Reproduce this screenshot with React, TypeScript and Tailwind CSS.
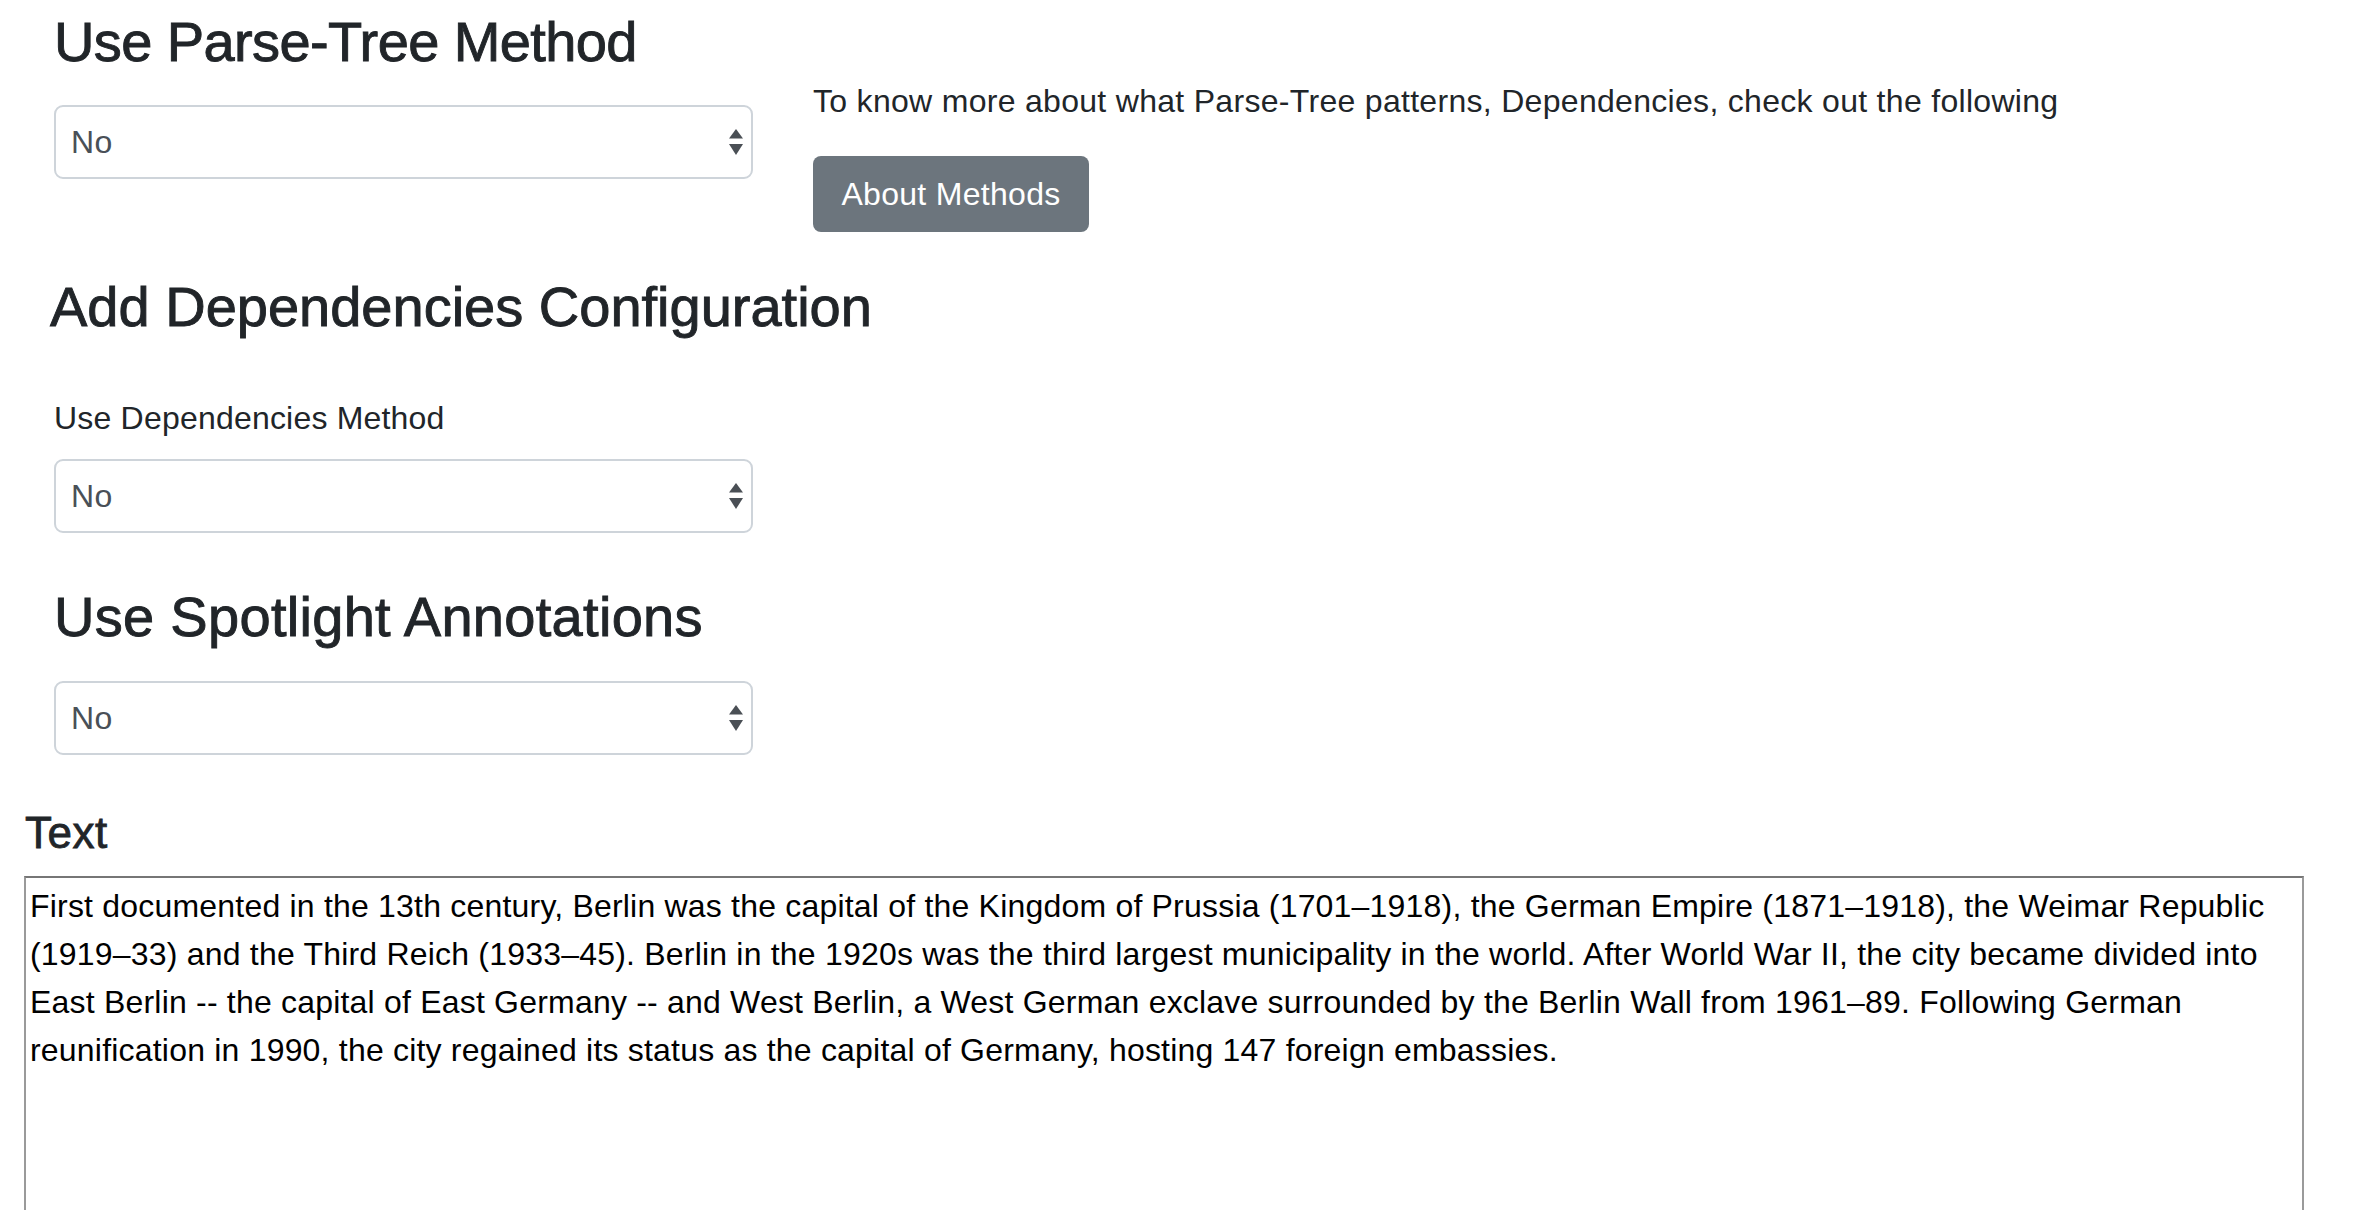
import React from "react";

function SelectBox() {
  return (
    <div className="flex h-[74px] w-[699px] items-center justify-between rounded-[9px] border-2 border-[#ced4da] bg-white pl-[15px] pr-[8px]">
      <span className="text-[32px] leading-[48px] tracking-[0.3px] text-[#495057]">No</span>
      <svg width="14" height="26" viewBox="0 0 14 26" className="shrink-0">
        <polygon points="0,9.5 7,0 14,9.5" fill="#4a4f55" />
        <polygon points="0,15 14,15 7,26" fill="#4a4f55" />
      </svg>
    </div>
  );
}

export default function App() {
  const text =
    "First documented in the 13th century, Berlin was the capital of the Kingdom of Prussia (1701–1918), the German Empire (1871–1918), the Weimar Republic (1919–33) and the Third Reich (1933–45). Berlin in the 1920s was the third largest municipality in the world. After World War II, the city became divided into East Berlin -- the capital of East Germany -- and West Berlin, a West German exclave surrounded by the Berlin Wall from 1961–89. Following German reunification in 1990, the city regained its status as the capital of Germany, hosting 147 foreign embassies.";
  return (
    <div className="min-h-[1210px] bg-white font-['Liberation_Sans',Arial,sans-serif] text-[#212529]">
      <div className="flex pl-[54px] pt-[8px]">
        <div className="w-[699px]">
          <h3 className="text-[56px] font-medium leading-[1.2] tracking-[-0.6px] [-webkit-text-stroke:0.9px_#212529]">
            Use Parse-Tree Method
          </h3>
          <div className="mt-[30px]">
            <SelectBox />
          </div>
        </div>
        <div className="ml-[60px] pt-[69px]">
          <p className="text-[32px] leading-[48px] tracking-[0.3px]">
            To know more about what Parse-Tree patterns, Dependencies, check out the following
          </p>
          <button className="mt-[31px] flex h-[76px] w-[276px] items-center justify-center rounded-[8px] bg-[#6c757d] text-[32px] leading-[48px] tracking-[0.3px] text-white">
            About Methods
          </button>
        </div>
      </div>

      <h3 className="mt-[41px] pl-[50px] text-[56px] font-medium leading-[1.2] [-webkit-text-stroke:0.9px_#212529]">
        Add Dependencies Configuration
      </h3>

      <div className="pl-[54px]">
        <label className="mt-[54px] block text-[32px] leading-[48px] tracking-[0.2px]">
          Use Dependencies Method
        </label>
        <div className="mt-[17px]">
          <SelectBox />
        </div>
        <h3 className="mt-[50px] text-[56px] font-medium leading-[1.2] tracking-[0.3px] [-webkit-text-stroke:0.9px_#212529]">
          Use Spotlight Annotations
        </h3>
        <div className="mt-[31px]">
          <SelectBox />
        </div>
      </div>

      <div className="pl-[24px]">
        <h4 className="mt-[52px] pl-[1px] text-[44px] font-medium leading-[1.2] tracking-[0.5px] [-webkit-text-stroke:0.8px_#212529]">
          Text
        </h4>
        <div className="mt-[16px] h-[360px] w-[2280px] border-2 border-[#9a9a9a] border-t-[#767676] px-[4px] pt-[4px] text-[32px] leading-[48px] tracking-[0.2px] text-black">
          {text}
        </div>
      </div>
    </div>
  );
}
